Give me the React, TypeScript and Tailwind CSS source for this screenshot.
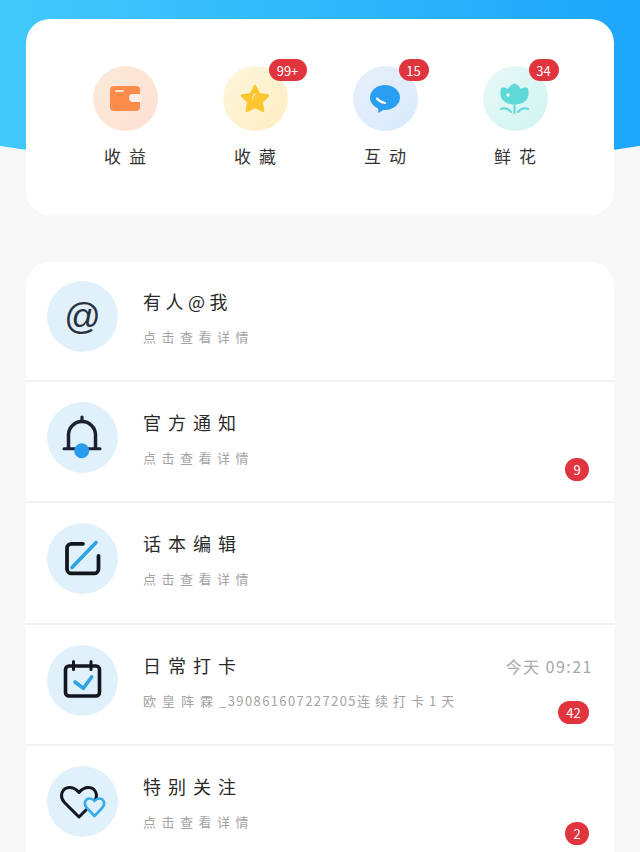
import type { ReactNode } from 'react'

function Badge({ text, className }: { text: string; className: string }) {
  return (
    <span className={`flex items-center justify-center rounded-full bg-[#e0343f] text-white text-[13px] leading-none ${className}`}>
      {text}
    </span>
  )
}

function WalletIcon() {
  return (
    <svg width="34" height="30" viewBox="0 0 34 30">
      <rect x="2" y="2" width="30" height="25" rx="4" fill="#fb8b4b" />
      <rect x="21" y="10" width="13" height="8" rx="4" fill="#fdeee6" />
      <rect x="7" y="6" width="9" height="2" rx="1" fill="#fde3d2" />
    </svg>
  )
}

function StarIcon() {
  return (
    <svg width="32" height="32" viewBox="0 0 32 32">
      <path
        d="M16 3.500l3.900 7.900 8.700 1.300-6.300 6.100 1.500 8.700-7.800-4.100-7.800 4.100 1.500-8.700-6.300-6.100 8.700-1.300z"
        fill="#fcc62f"
        stroke="#fcc62f"
        strokeWidth="3"
        strokeLinejoin="round"
      />
      <path d="M13.500 15c.2-2 1.200-3.300 2.800-4" fill="none" stroke="#fff2c6" strokeWidth="1.200" strokeLinecap="round" />
    </svg>
  )
}

function ChatIcon() {
  return (
    <svg width="32" height="32" viewBox="0 0 32 32">
      <ellipse cx="16" cy="14.500" rx="15" ry="12.500" fill="#2a9ff1" />
      <path d="M9 23l.3 7 6.700-4z" fill="#2a9ff1" strokeLinejoin="round" />
      <path d="M8 15.500c2 2.500 4.500 4 8 4.500" fill="none" stroke="#fff" strokeWidth="2.200" strokeLinecap="round" />
    </svg>
  )
}

function TulipIcon() {
  return (
    <svg width="30" height="32" viewBox="0 0 30 32">
      <path
        d="M1 5c2.500-1 5-.5 7 1 1.500-2.500 4-5 6.500-5.500C17 1 19.500 3.500 21 6c2-1.500 4.500-2 7-1 .5 2 .5 4 .5 6 0 6-5.500 10.500-14 10.500S.5 17 .5 11c0-2 0-4 .5-6z"
        fill="#5fd8d8"
      />
      <path d="M14.500 22v8M1 26c3.500-1.500 7-.5 10 3M28 26c-3.500-1.500-7-.5-10 3" fill="none" stroke="#5fd8d8" strokeWidth="2" strokeLinecap="round" />
      <circle cx="8" cy="12" r="1.800" fill="#e6fbfa" />
    </svg>
  )
}

function BellIcon() {
  return (
    <svg width="71" height="71" viewBox="0 0 71 71">
      <path d="M21.500 46V33a13.500 13.500 0 0127 0v13" fill="none" stroke="#1c2130" strokeWidth="3.500" />
      <path d="M35 15v4" stroke="#1c2130" strokeWidth="3.200" strokeLinecap="round" />
      <path d="M17 46.700h36" stroke="#1c2130" strokeWidth="3" strokeLinecap="round" />
      <circle cx="34.700" cy="48.700" r="7.500" fill="#2b9cec" />
    </svg>
  )
}

function EditIcon() {
  return (
    <svg width="71" height="71" viewBox="0 0 71 71">
      <path d="M36 20.800H24.500a4.500 4.500 0 00-4.500 4.500v20.600a4.500 4.500 0 004.500 4.500h22.500a4.500 4.500 0 004.500-4.500V33" fill="none" stroke="#12161f" strokeWidth="3.800" strokeLinecap="round" />
      <path d="M25 44.500L49 19.500" stroke="#2fa4e4" strokeWidth="3.600" strokeLinecap="round" />
    </svg>
  )
}

function CalendarIcon() {
  return (
    <svg width="71" height="71" viewBox="0 0 71 71">
      <rect x="18.500" y="21" width="34" height="30" rx="3.500" fill="none" stroke="#12161f" strokeWidth="3.600" />
      <path d="M26.500 16.500v8M44 16.500v8" stroke="#12161f" strokeWidth="3" strokeLinecap="round" />
      <path d="M28 37l8.300 6.300L44.700 32" fill="none" stroke="#2fa4e4" strokeWidth="3.600" strokeLinecap="round" strokeLinejoin="round" />
    </svg>
  )
}

function HeartsIcon() {
  return (
    <svg width="71" height="71" viewBox="0 0 71 71">
      <path
        d="M32 51L17.500 36.500c-6-6.500-2-15 5-15 4 0 7 2 9.500 5 2.500-3 5.500-5 9.500-5 7 0 11 8.500 5 15z"
        fill="none"
        stroke="#12161f"
        strokeWidth="3"
        strokeLinejoin="round"
      />
      <path
        d="M47.500 50l-8-8.500c-3.500-4-1-9 3.200-9 2 0 3.500 1 4.800 2.500 1.300-1.500 2.800-2.500 4.800-2.500 4.200 0 6.700 5 3.200 9z"
        fill="#e1f1fc"
        stroke="#35ade6"
        strokeWidth="2.600"
        strokeLinejoin="round"
      />
    </svg>
  )
}

const shortcuts: { label: string; circle: string; icon: ReactNode; badge?: string; badgeClass?: string }[] = [
  { label: '收益', circle: 'from-[#fbead9] to-[#fee0d3]', icon: <WalletIcon /> },
  { label: '收藏', circle: 'from-[#fef7dc] to-[#feedc2]', icon: <StarIcon />, badge: '99+', badgeClass: 'w-[38px] left-[46px]' },
  { label: '互动', circle: 'from-[#e8f0fa] to-[#d8e9fc]', icon: <ChatIcon />, badge: '15', badgeClass: 'w-[30px] left-[46px]' },
  { label: '鲜花', circle: 'from-[#e8f9f7] to-[#cff4f1]', icon: <TulipIcon />, badge: '34', badgeClass: 'w-[30px] left-[46px]' },
]

const rows: { title: string; icon: ReactNode; badge?: string; badgeClass?: string; time?: string; sub?: ReactNode }[] = [
  { title: '有人@我', icon: <span className="font-['Liberation_Sans',sans-serif] text-[36px] leading-none text-[#2a3140]">@</span> },
  { title: '官方通知', icon: <BellIcon />, badge: '9', badgeClass: 'w-[24px]' },
  { title: '话本编辑', icon: <EditIcon /> },
  {
    title: '日常打卡',
    icon: <CalendarIcon />,
    badge: '42',
    badgeClass: 'w-[31px]',
    time: '今天 09:21',
    sub: (
      <>
        <span className="tracking-[6px]">欧皇阵霖</span>
        <span className="tracking-[1.400px]">_390861607227205</span>
        <span className="tracking-[5px]">连续打卡1天</span>
      </>
    ),
  },
  { title: '特别关注', icon: <HeartsIcon />, badge: '2', badgeClass: 'w-[24px]' },
]

export default function App() {
  return (
    <div className="relative h-[852px] w-[640px] overflow-hidden bg-[#f9f8f9] font-['Noto_Sans_CJK_SC',sans-serif]">
      {/* blue header behind the cards */}
      <div className="absolute left-[-180px] top-[-20px] h-[189px] w-[1000px] rounded-b-[500px_100px] bg-gradient-to-r from-[#4bd3fa] via-[#2fb8fb] to-[#149bfb]" />

      <main className="relative px-[26px] pt-[19px]">
        {/* shortcuts card */}
        <section className="grid h-[196px] grid-cols-4 rounded-[24px] bg-white px-[34px] pt-[47px]">
          {shortcuts.map((item) => (
            <div key={item.label} className="flex flex-col items-center">
              <div className={`relative flex h-[65px] w-[65px] items-center justify-center rounded-full bg-gradient-to-br ${item.circle}`}>
                {item.icon}
                {item.badge && (
                  <Badge text={item.badge} className={`absolute top-[-7px] h-[22px] ${item.badgeClass}`} />
                )}
              </div>
              <span className="mt-[13px] pl-[8px] text-[17px] leading-[24px] tracking-[8px] text-[#333]">{item.label}</span>
            </div>
          ))}
        </section>

        {/* message list */}
        <section className="mt-[47px] rounded-t-[24px] bg-white">
          {rows.map((row, i) => (
            <div key={row.title} className={`flex border-b-2 border-[#f3f2f3] pl-[21px] pr-[25px] ${i === 0 ? 'h-[120px] pt-[19px]' : 'h-[121.300px] pt-[20px]'}`}>
              <div className="flex h-[71px] w-[71px] shrink-0 items-center justify-center rounded-full bg-[#e1f1fc]">
                {row.icon}
              </div>
              <div className="ml-[25px] min-w-0 flex-1 pt-[7px]">
                <p className={`text-[18px] leading-[26px] text-[#2a2a2a] ${i === 0 ? 'tracking-[4.500px]' : 'tracking-[7px]'}`}>{row.title}</p>
                <p className="mt-[13px] whitespace-nowrap text-[13px] leading-[20px] tracking-[5.500px] text-[#a3a3a3]">
                  {row.sub ?? '点击查看详情'}
                </p>
              </div>
              <div className="flex h-[79px] flex-col items-end justify-between">
                {row.time ? <span className="mr-[-4px] mt-[10px] whitespace-nowrap text-[16px] leading-[22px] tracking-[1.500px] text-[#a8a8a8]">{row.time}</span> : <span />}
                {row.badge && <Badge text={row.badge} className={`h-[23px] ${row.badgeClass}`} />}
              </div>
            </div>
          ))}
        </section>
      </main>
    </div>
  )
}
